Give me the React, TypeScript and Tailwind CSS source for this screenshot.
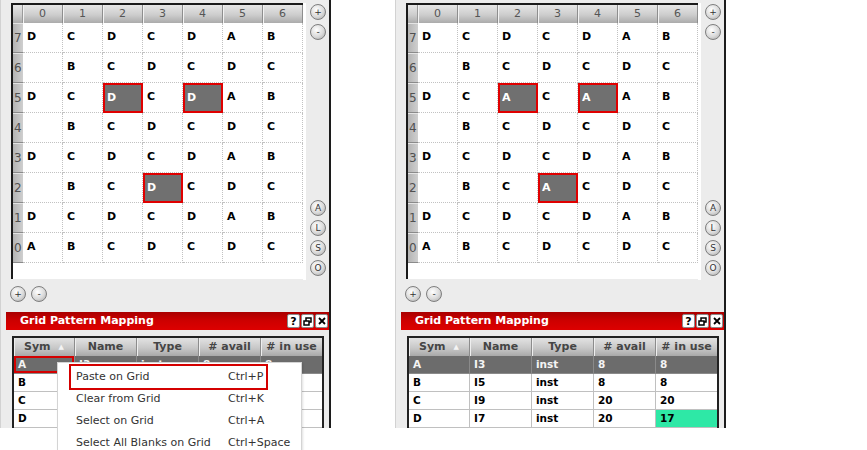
import React from "react";

type Mode = "menu" | "done";

const GRID: { n: number; cells: string[] }[] = [
  { n: 7, cells: ["D", "C", "D", "C", "D", "A", "B"] },
  { n: 6, cells: ["", "B", "C", "D", "C", "D", "C"] },
  { n: 5, cells: ["D", "C", "*", "C", "*", "A", "B"] },
  { n: 4, cells: ["", "B", "C", "D", "C", "D", "C"] },
  { n: 3, cells: ["D", "C", "D", "C", "D", "A", "B"] },
  { n: 2, cells: ["", "B", "C", "*", "C", "D", "C"] },
  { n: 1, cells: ["D", "C", "D", "C", "D", "A", "B"] },
  { n: 0, cells: ["A", "B", "C", "D", "C", "D", "C"] },
];

const ROWS = [
  ["A", "I3", "inst", "8", "8"],
  ["B", "I5", "inst", "8", "8"],
  ["C", "I9", "inst", "20", "20"],
  ["D", "I7", "inst", "20", "17"],
];

const COL_W = ["w-[61px]", "w-[62px]", "w-[62px]", "w-[62px]", "w-[61px]"];
const HEADS = ["Sym", "Name", "Type", "# avail", "# in use"];

const MENU = [
  ["Paste on Grid", "Ctrl+P"],
  ["Clear from Grid", "Ctrl+K"],
  ["Select on Grid", "Ctrl+A"],
  ["Select All Blanks on Grid", "Ctrl+Space"],
];

function Round({ label }: { label: string }) {
  return (
    <div className="flex h-[16px] w-[16px] items-center justify-center rounded-full border border-[#7e7e7e] bg-[radial-gradient(circle_at_40%_35%,#ffffff,#dadada_55%,#a4a4a4)] text-[9px] leading-none text-[#333]">
      {label}
    </div>
  );
}

function Grid({ sym }: { sym: string }) {
  return (
    <div className="flex h-[276px] w-[292px] flex-col border-l-2 border-t-2 border-[#1a1a1a] bg-white">
      <div className="flex h-[18px] bg-[linear-gradient(to_bottom,#e6e6e6,#cdcdcd_55%,#ababab)]">
        <div className="w-[10px] border-r border-[#9a9a9a]" />
        {[0, 1, 2, 3, 4, 5, 6].map((c) => (
          <div
            key={c}
            className="flex w-[40px] items-center justify-center border-r border-[#8e8e8e] text-[11px] text-[#555] shadow-[inset_1px_0_0_#f2f2f2]"
          >
            {c}
          </div>
        ))}
      </div>
      {GRID.map((r) => (
        <div key={r.n} className="flex h-[30px]">
          <div className="flex w-[10px] items-center border-b border-t border-b-[#8a8a8a] border-t-[#e4e4e4] bg-[linear-gradient(to_right,#b4b4b4,#cfcfcf)] pl-[1px] text-[12px] leading-none text-[#505050]">
            {r.n}
          </div>
          {r.cells.map((c, i) =>
            c === "*" ? (
              <div
                key={i}
                className="flex h-[30px] w-[40px] items-center border-2 border-[#e00000] bg-[#707070] pl-[2px] text-[11px] font-bold text-white"
              >
                {sym}
              </div>
            ) : (
              <div
                key={i}
                className="flex h-[30px] w-[40px] items-center border-b border-r border-dotted border-[#c2c2c2] pl-[4px] text-[11px] font-bold text-black"
              >
                {c}
              </div>
            )
          )}
        </div>
      ))}
    </div>
  );
}

function TitleBar() {
  return (
    <div className="ml-[5px] mt-[10px] flex h-[19px] items-center justify-between bg-[linear-gradient(to_bottom,#a80000,#cc0000_45%,#dd0000)] pl-[14px] pr-[1px]">
      <span className="text-[11px] font-bold text-white">Grid Pattern Mapping</span>
      <div className="flex gap-[1px]">
        <div className="flex h-[14px] w-[13px] items-center justify-center rounded-[2px] border border-[#8a8a8a] bg-white text-[11px] font-bold leading-none text-black">
          ?
        </div>
        <div className="flex h-[14px] w-[13px] items-center justify-center rounded-[2px] border border-[#8a8a8a] bg-white">
          <svg width="9" height="9" viewBox="0 0 9 9" fill="none" stroke="#000" strokeWidth="1.5">
            <rect x="3" y="1" width="5" height="4" />
            <rect x="1" y="4" width="5" height="4" fill="#fff" />
          </svg>
        </div>
        <div className="flex h-[14px] w-[13px] items-center justify-center rounded-[2px] border border-[#8a8a8a] bg-white">
          <svg width="8" height="8" viewBox="0 0 8 8" stroke="#000" strokeWidth="1.8">
            <path d="M1 1 L7 7 M7 1 L1 7" />
          </svg>
        </div>
      </div>
    </div>
  );
}

function Table({ mode }: { mode: Mode }) {
  return (
    <div className="ml-[11px] mt-[6px] flex w-[312px] flex-col border-x-2 border-t-2 border-[#222]">
      <div className="flex h-[18px] bg-[linear-gradient(to_bottom,#e2e2e2,#c8c8c8_55%,#a8a8a8)]">
        {HEADS.map((h, i) => (
          <div
            key={h}
            className={`${COL_W[i]} flex items-center justify-center gap-[8px] border-r border-[#8c8c8c] text-[11px] font-bold text-[#454545] shadow-[inset_1px_0_0_#eeeeee] last:border-r-0`}
          >
            {h}
            {i === 0 && <span className="text-[7px] text-[#f4f4f4]">▲</span>}
          </div>
        ))}
      </div>
      {ROWS.map((r, ri) => (
        <div key={r[0]} className={`flex h-[18px] ${ri === 0 ? "bg-[#6c6c6c]" : "bg-white"}`}>
          {r.map((v, ci) => {
            const sel = ri === 0;
            const green = mode === "done" && ri === 3 && ci === 4;
            const red = mode === "menu" && sel && ci === 0;
            // under the open menu only the Sym column of rows B-D shows
            const hidden = mode === "menu" && ri > 0 && ci > 0;
            return (
              <div
                key={ci}
                className={`${COL_W[ci]} flex items-center border-b border-r pl-[4px] text-[10.5px] font-bold last:border-r-0 ${
                  sel ? "border-[#8a8a8a] text-[#f4f4f4]" : "border-[#c0c0c0] text-black"
                } ${green ? "bg-[#2ee8a6] text-[#e8fff6]" : ""} ${
                  red ? "shadow-[inset_0_0_0_2px_#d40000]" : ""
                }`}
              >
                {hidden ? "" : v}
              </div>
            );
          })}
        </div>
      ))}
    </div>
  );
}

function ContextMenu() {
  return (
    <div className="absolute left-[56px] top-[362px] h-[96px] w-[245px] border border-[#d4d4d4] bg-white pt-[3px] shadow-[1px_1px_2px_rgba(0,0,0,0.12)]">
      {MENU.map(([label, key]) => (
        <div key={label} className="flex h-[22px] items-center text-[11px] text-[#333]">
          <span className="w-[170px] pl-[18px]">{label}</span>
          <span>{key}</span>
        </div>
      ))}
      <div className="absolute left-[11px] top-[1px] h-[26px] w-[199px] border-2 border-[#d40000]" />
    </div>
  );
}

function Panel({ sym, mode }: { sym: string; mode: Mode }) {
  return (
    <div className="relative flex h-[428px] w-[331px] flex-col border-l border-r-2 border-l-[#d2d2d2] border-r-[#1c1c1c] bg-[#ececec]">
      <div className="flex pl-[10px] pt-[3px]">
        <Grid sym={sym} />
        <div className="flex w-[3px] bg-white" />
        <div className="ml-[4px] mt-[1px] flex h-[276px] flex-col">
          <div className="flex flex-col gap-[4px]">
            <Round label="+" />
            <Round label="-" />
          </div>
          <div className="mt-auto flex flex-col gap-[4px] pb-[4px]">
            <Round label="A" />
            <Round label="L" />
            <Round label="S" />
            <Round label="O" />
          </div>
        </div>
      </div>
      <div className="mt-[6px] flex gap-[5px] pl-[9px]">
        <Round label="+" />
        <Round label="-" />
      </div>
      <TitleBar />
      <Table mode={mode} />
      {mode === "menu" && <ContextMenu />}
    </div>
  );
}

export default function App() {
  return (
    <div className="flex h-[450px] w-[867px] gap-[64px] overflow-hidden bg-white font-['DejaVu_Sans',sans-serif]">
      <Panel sym="D" mode="menu" />
      <Panel sym="A" mode="done" />
    </div>
  );
}
